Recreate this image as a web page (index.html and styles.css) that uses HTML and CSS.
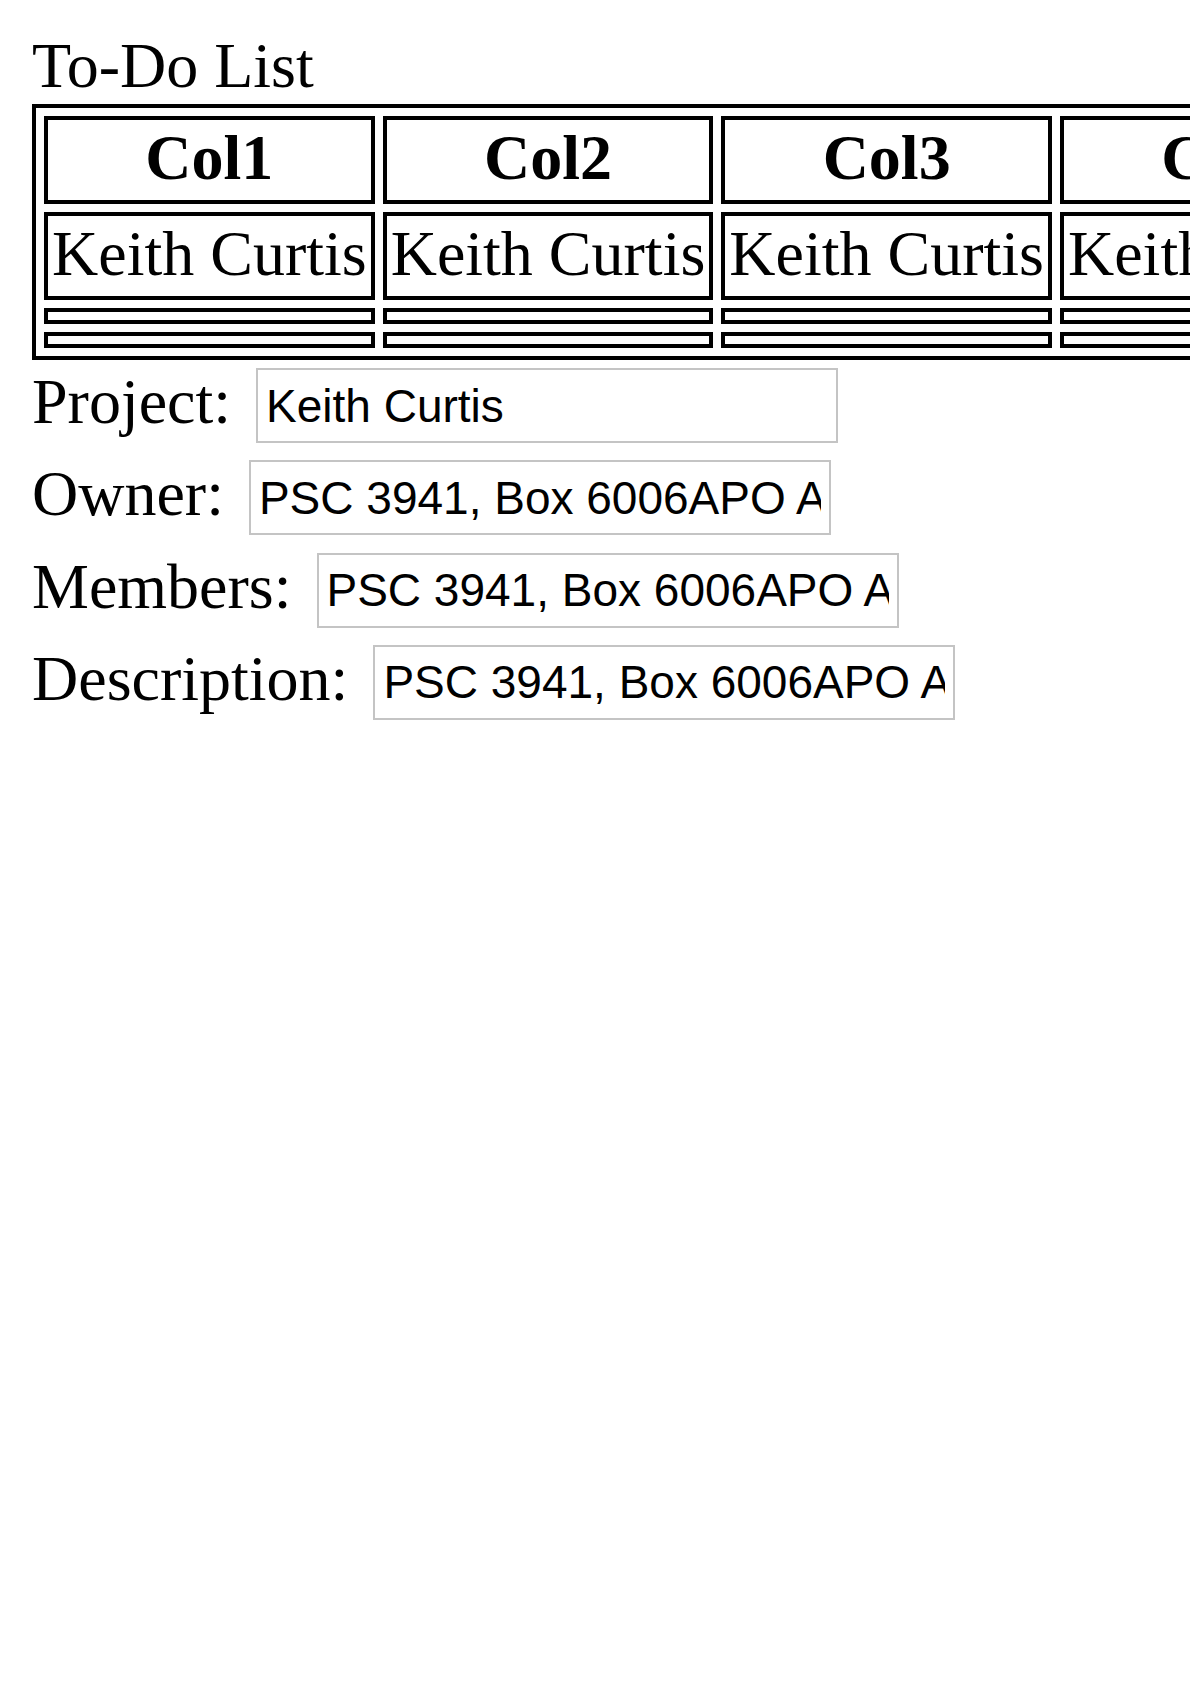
FILE: index.html
```html
<!DOCTYPE html>
<html>
<head>
<meta charset="utf-8">
<title>To-Do List</title>
<link rel="stylesheet" href="styles.css">
</head>
<body>
<div class="title">To-Do List</div>
<table class="grid">
  <tr><th>Col1</th><th>Col2</th><th>Col3</th><th>Col4</th></tr>
  <tr><td>Keith Curtis</td><td>Keith Curtis</td><td>Keith Curtis</td><td>Keith Curtis</td></tr>
  <tr><td></td><td></td><td></td><td></td></tr>
  <tr><td></td><td></td><td></td><td></td></tr>
</table>
<div class="form">
  <div class="row"><label class="label">Project:</label><input class="field" type="text" value="Keith Curtis"></div>
  <div class="row"><label class="label">Owner:</label><input class="field" type="text" value="PSC 3941, Box 6006APO AA 23417"></div>
  <div class="row"><label class="label">Members:</label><input class="field" type="text" value="PSC 3941, Box 6006APO AA 23417"></div>
  <div class="row"><label class="label">Description:</label><input class="field" type="text" value="PSC 3941, Box 6006APO AA 23417"></div>
</div>
</body>
</html>
```
FILE: styles.css
```css
html {
  overflow: hidden;
  background: #fff;
}
body {
  margin: 0;
  padding: 28px 0 0 32px;
  font-family: "Liberation Serif", "Times New Roman", serif;
  font-size: 64px;
  color: #000;
}
.title {
  line-height: 76px;
  white-space: nowrap;
}
.grid {
  border: 4px solid #000;
  border-collapse: separate;
  border-spacing: 8px;
  font-size: 64px;
}
.grid th,
.grid td {
  border: 4px solid #000;
  padding: 2px 4px 6px 4px;
  line-height: 72px;
  white-space: nowrap;
}
.grid th {
  font-weight: bold;
  text-align: center;
}
.grid td {
  text-align: left;
}
.form {
  padding-top: 8px;
}
.row {
  display: flex;
  align-items: flex-start;
  gap: 25px;
  margin-bottom: 17.33px;
}
.label {
  line-height: 68px;
  white-space: nowrap;
}
.field {
  box-sizing: border-box;
  width: 582px;
  height: 75px;
  margin: 0;
  padding: 0 8px;
  border: 2px solid #c4c4c4;
  font-family: "Liberation Sans", Arial, sans-serif;
  font-size: 46px;
  color: #000;
  background: #fff;
  outline: none;
}
```
